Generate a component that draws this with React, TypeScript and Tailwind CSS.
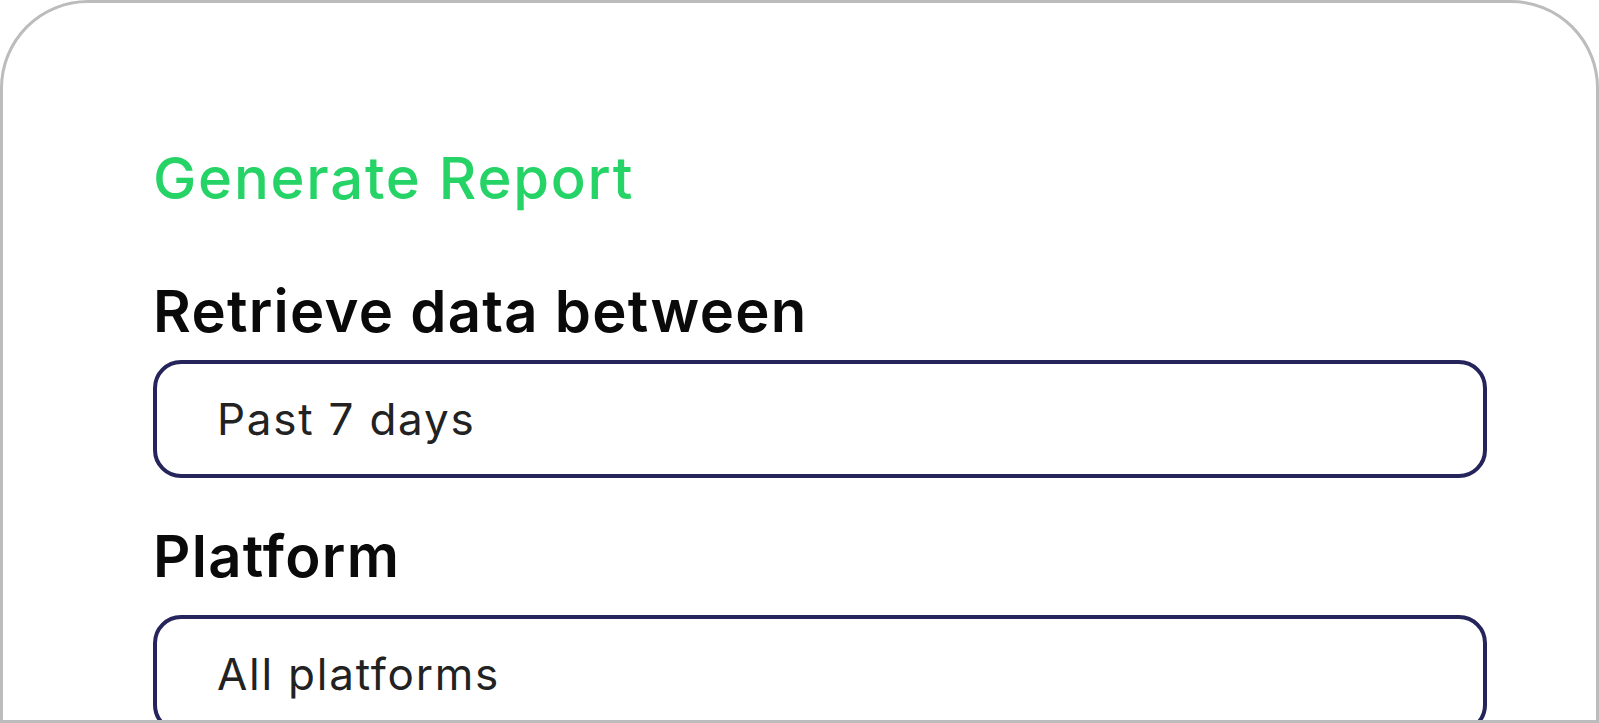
import React from "react";

const fields = [
  { label: "Retrieve data between", value: "Past 7 days", gap: "mt-[20px]" },
  { label: "Platform", value: "All platforms", gap: "mt-[30px]" },
];

export default function App() {
  return (
    <div className="w-[1599px] h-[723px] bg-white overflow-hidden">
      <section className="h-full border-[3px] border-[#bcbcbc] rounded-t-[88px] overflow-hidden pl-[150px] pr-[109px] pt-[146px] font-['Inter',sans-serif]">
        {/* Header */}
        <h1 className="text-[58px] leading-none font-medium text-[#25d366] tracking-[0.03em]">
          Generate Report
        </h1>

        {/* Fields */}
        <div className="mt-[75px] flex flex-col">
          {fields.map((f, i) => (
            <div key={f.label} className={i > 0 ? "mt-[49px]" : ""}>
              <label className="block text-[58px] leading-none font-semibold text-[#0a0a0a] tracking-[0.022em]">
                {f.label}
              </label>
              <div
                className={`${f.gap} h-[118px] border-4 border-[#25255c] rounded-[28px] flex items-center pl-[60px]`}
              >
                <span className="text-[44px] leading-none font-normal text-[#222222] tracking-[0.04em]">
                  {f.value}
                </span>
              </div>
            </div>
          ))}
        </div>
      </section>
    </div>
  );
}
